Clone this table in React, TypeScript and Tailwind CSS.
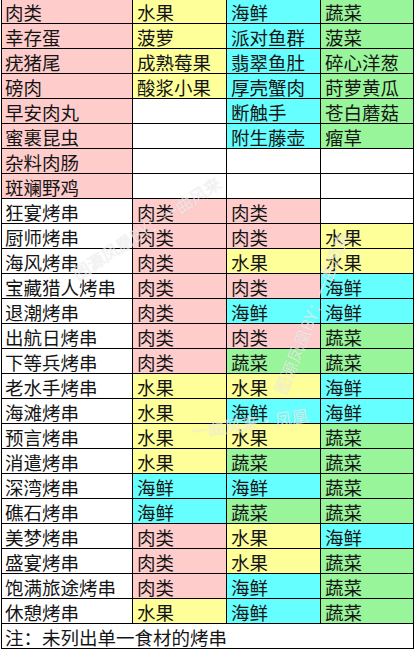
import React from 'react';

type Cat = '肉类' | '水果' | '海鲜' | '蔬菜' | '';

// colour of each ingredient group
const catBg: Record<string, string> = {
  肉类: 'bg-[#ffcccc]',
  水果: 'bg-[#ffff99]',
  海鲜: 'bg-[#66ffff]',
  蔬菜: 'bg-[#99f599]',
  '': 'bg-white',
};

// top block: the ingredient lists per group
const ingredients: string[][] = [
  ['肉类', '水果', '海鲜', '蔬菜'],
  ['幸存蛋', '菠萝', '派对鱼群', '菠菜'],
  ['疣猪尾', '成熟莓果', '翡翠鱼肚', '碎心洋葱'],
  ['磅肉', '酸浆小果', '厚壳蟹肉', '莳萝黄瓜'],
  ['早安肉丸', '', '断触手', '苍白蘑菇'],
  ['蜜裹昆虫', '', '附生藤壶', '瘤草'],
  ['杂料肉肠', '', '', ''],
  ['斑斓野鸡', '', '', ''],
];
const groupOrder: Cat[] = ['肉类', '水果', '海鲜', '蔬菜'];

// kebab recipes
const kebabs: [string, Cat, Cat, Cat][] = [
  ['狂宴烤串', '肉类', '肉类', ''],
  ['厨师烤串', '肉类', '肉类', '水果'],
  ['海风烤串', '肉类', '水果', '水果'],
  ['宝藏猎人烤串', '肉类', '肉类', '海鲜'],
  ['退潮烤串', '肉类', '海鲜', '海鲜'],
  ['出航日烤串', '肉类', '肉类', '蔬菜'],
  ['下等兵烤串', '肉类', '蔬菜', '蔬菜'],
  ['老水手烤串', '水果', '水果', '海鲜'],
  ['海滩烤串', '水果', '海鲜', '海鲜'],
  ['预言烤串', '水果', '水果', '蔬菜'],
  ['消遣烤串', '水果', '蔬菜', '蔬菜'],
  ['深湾烤串', '海鲜', '海鲜', '蔬菜'],
  ['礁石烤串', '海鲜', '蔬菜', '蔬菜'],
  ['美梦烤串', '肉类', '水果', '海鲜'],
  ['盛宴烤串', '肉类', '水果', '蔬菜'],
  ['饱满旅途烤串', '肉类', '海鲜', '蔬菜'],
  ['休憩烤串', '水果', '海鲜', '蔬菜'],
];

const Cell: React.FC<{ text: string; bg: string; first?: boolean }> = ({ text, bg, first }) => (
  <div
    className={`h-[24px] ${bg} ${first ? 'pl-[3px]' : 'pl-[4px]'} pt-[3px] text-[18.5px] leading-[21px] text-[#151515] whitespace-nowrap`}
  >
    {text}
  </div>
);

// faint diagonal watermark lying over the sheet
const Watermark: React.FC<{ className: string; text: string }> = ({ className, text }) => (
  <div
    className={`absolute whitespace-nowrap text-[17px] text-white/60 [text-shadow:0_0_1px_rgba(140,140,140,0.3)] pointer-events-none ${className}`}
  >
    {text}
  </div>
);

export default function App() {
  return (
    <div
      className="relative w-[414px] h-[650px] overflow-hidden bg-white"
      style={{ fontFamily: '"Noto Sans CJK SC", "Noto Sans", sans-serif' }}
    >
      <div className="ml-[1px] mt-[-2px] w-[413px] bg-black p-px grid grid-cols-[130px_93px_93px_92px] gap-px">
        {ingredients.map((row, r) =>
          row.map((t, c) => (
            <Cell
              key={`i${r}-${c}`}
              text={t}
              first={c === 0}
              bg={t === '' ? 'bg-white' : catBg[groupOrder[c]]}
            />
          ))
        )}
        {kebabs.map((k) => (
          <React.Fragment key={k[0]}>
            <Cell text={k[0]} bg="bg-white" first />
            <Cell text={k[1]} bg={catBg[k[1]]} />
            <Cell text={k[2]} bg={catBg[k[2]]} />
            <Cell text={k[3]} bg={catBg[k[3]]} />
          </React.Fragment>
        ))}
        <div className="col-span-4 h-[24px] bg-white pl-[3px] pt-[3px] text-[18.5px] leading-[21px] text-[#151515] whitespace-nowrap">
          注：未列出单一食材的烤串
        </div>
      </div>

      <Watermark className="left-[60px] top-[215px] -rotate-[33deg]" text="图源凤凰BY：一曲风来" />
      <Watermark className="left-[225px] top-[300px] -rotate-[68deg]" text="图源凤凰BY：一曲风来" />
      <Watermark className="left-[190px] top-[410px] -rotate-[8deg]" text="一曲风来·凤凰" />
    </div>
  );
}
